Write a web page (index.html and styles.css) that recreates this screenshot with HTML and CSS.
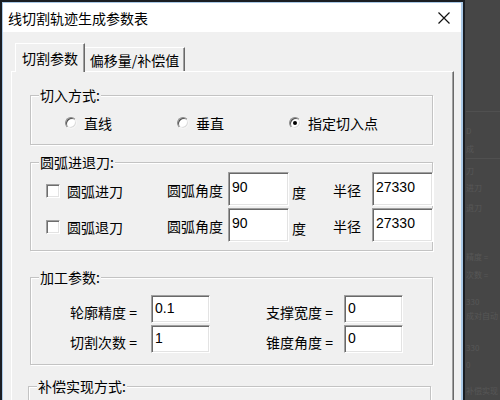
FILE: index.html
```html
<!DOCTYPE html>
<html>
<head>
<meta charset="utf-8">
<title>线切割轨迹生成参数表</title>
<link rel="stylesheet" href="styles.css">
</head>
<body>
<div class="window">
  <div class="frame">
    <div class="titlebar">
      <span class="title">线切割轨迹生成参数表</span>
      <svg class="close" width="12" height="12" viewBox="0 0 12 12"><path d="M0.5 0.5 L11.5 11.5 M11.5 0.5 L0.5 11.5" stroke="#111" stroke-width="1.2" fill="none"/></svg>
    </div>
    <div class="client">
      <div class="tabs">
        <div class="tab active">切割参数</div>
        <div class="tab">偏移量/补偿值</div>
      </div>
      <div class="panel">
        <fieldset class="group g1">
          <legend>切入方式:</legend>
          <div class="radios">
            <div class="radio"><span class="rb"></span>直线</div>
            <div class="radio"><span class="rb"></span>垂直</div>
            <div class="radio"><span class="rb on"></span>指定切入点</div>
          </div>
        </fieldset>
        <fieldset class="group g2">
          <legend>圆弧进退刀:</legend>
          <div class="arc">
            <div class="check"><span class="cb"></span>圆弧进刀</div>
            <div class="lbl">圆弧角度</div>
            <div class="edit tall">90</div>
            <div class="lbl deg">度</div>
            <div class="lbl">半径</div>
            <div class="edit tall">27330</div>
            <div class="check"><span class="cb"></span>圆弧退刀</div>
            <div class="lbl">圆弧角度</div>
            <div class="edit tall">90</div>
            <div class="lbl deg">度</div>
            <div class="lbl">半径</div>
            <div class="edit tall">27330</div>
          </div>
        </fieldset>
        <fieldset class="group g3">
          <legend>加工参数:</legend>
          <div class="proc">
            <div class="lbl low">轮廓精度 =</div>
            <div class="edit">0.1</div>
            <div></div>
            <div class="lbl low">支撑宽度 =</div>
            <div class="edit">0</div>
            <div class="lbl low">切割次数 =</div>
            <div class="edit">1</div>
            <div></div>
            <div class="lbl low">锥度角度 =</div>
            <div class="edit">0</div>
          </div>
        </fieldset>
        <fieldset class="group g4">
          <legend>补偿实现方式:</legend>
          <div class="g4body"></div>
        </fieldset>
      </div>
    </div>
  </div>
</div>
<div class="desk">
  <div class="hl h1"></div>
  <div class="ft d1">D</div>
  <div class="ft d2">成</div>
  <div class="hl h2"></div>
  <div class="ft d3">刀</div>
  <div class="ft d4">进刀</div>
  <div class="ft d5">退刀</div>
  <div class="ft d6">精度 =</div>
  <div class="ft d7">次数 =</div>
  <div class="ft d8">330</div>
  <div class="ft d9">成对自动</div>
  <div class="ft d10">330</div>
  <div class="ft d11">0</div>
  <div class="ft d12">补偿实现</div>
</div>
</body>
</html>
```
FILE: styles.css
```css
* { box-sizing: border-box; }
html, body { margin: 0; padding: 0; }
body {
  width: 500px;
  height: 400px;
  overflow: hidden;
  background: #464646;
  display: flex;
  font-family: "Noto Sans CJK SC", "Liberation Sans", sans-serif;
  font-size: 14px;
  color: #000;
}
.window {
  width: 465px;
  flex: none;
  height: 400px;
  overflow: hidden;
  border: 2px solid #1a1d22;
  border-bottom: 0;
}
.frame {
  height: 100%;
  border: 1px solid #a9c8e6;
  border-right-width: 2px;
  border-bottom: 0;
  display: flex;
  flex-direction: column;
}
.titlebar {
  height: 29px;
  flex: none;
  background: #fff;
  display: flex;
  align-items: center;
  padding: 0 11px 0 5px;
}
.title { flex: 1; line-height: 16px; white-space: nowrap; }
.close { display: block; flex: none; }
.client {
  flex: 1;
  min-height: 0;
  overflow: hidden;
  background: #f0f0f0;
  padding: 11px 7px 0 8px;
  display: flex;
  flex-direction: column;
}
.tabs {
  height: 28px;
  flex: none;
  display: flex;
  align-items: flex-end;
  padding-left: 4px;
}
.tab {
  height: 24px;
  width: 100px;
  display: flex;
  align-items: center;
  justify-content: center;
  line-height: 16px;
  border-top: 1px solid #fff;
  border-right: 1px solid #696969;
  box-shadow: inset -1px 0 0 #a0a0a0;
  background: #f0f0f0;
  padding-top: 1px;
}
.tab.active {
  width: 70px;
  height: 29px;
  margin-bottom: -1px;
  border-left: 1px solid #fff;
  position: relative;
  z-index: 1;
  padding-top: 0;
}
.panel {
  flex: 1;
  min-height: 0;
  border-top: 1px solid #fff;
  border-left: 1px solid #fff;
  border-right: 1px solid #696969;
  box-shadow: inset -1px 0 0 #a0a0a0;
  padding: 15px 0 0 18px;
}
.group {
  margin: 0;
  padding: 0;
  min-width: 0;
  width: 403px;
  border: 1px solid #c3c3c3;
  box-shadow: inset 1px 1px 0 #fff, 1px 1px 0 #fff;
}
.group legend {
  margin-left: 8px;
  padding: 0 1px;
  height: 16px;
  line-height: 16px;
  background: #f0f0f0;
}
.g2 { margin-top: 9px; }
.g3 { margin-top: 18px; }
.g4 { margin-top: 13px; margin-left: -2px; }
.radios {
  display: grid;
  grid-template-columns: 112px 112px 112px;
  height: 16px;
  margin: 12px 0 13px 34px;
}
.radio { display: flex; align-items: center; gap: 7px; line-height: 16px; }
.rb {
  width: 12px;
  height: 12px;
  border-radius: 50%;
  background: #fff;
  border: 1px solid;
  border-color: #8a8a8a #f4f4f4 #f4f4f4 #8a8a8a;
  box-shadow: inset 1px 1px 0 #505050, inset -1px -1px 0 #dcdcdc;
  display: flex;
  align-items: center;
  justify-content: center;
}
.rb.on::after {
  content: "";
  width: 4px;
  height: 4px;
  border-radius: 50%;
  background: #000;
}
.arc {
  display: grid;
  grid-template-columns: 121px 61px 61px 44px 39px 61px;
  grid-template-rows: 34px 34px;
  row-gap: 2px;
  align-items: center;
  margin: 2px 0 8px 15px;
}
.check { display: flex; align-items: center; gap: 7px; line-height: 16px; padding-top: 3px; }
.cb {
  width: 14px;
  height: 14px;
  background: #fff;
  border: 1px solid;
  border-color: #a0a0a0 #fff #fff #a0a0a0;
  box-shadow: inset 1px 1px 0 #6e6e6e, inset -1px -1px 0 #e3e3e3;
}
.lbl { line-height: 16px; white-space: nowrap; padding-top: 2px; }
.lbl.deg { padding-left: 3px; padding-top: 6px; }
.lbl.low { padding-top: 5px; }
.edit {
  align-self: stretch;
  background: #fff;
  border: 1px solid;
  border-color: #a0a0a0 #fff #fff #a0a0a0;
  box-shadow: inset 1px 1px 0 #696969, inset -1px -1px 0 #e3e3e3;
  font-family: "Liberation Sans", Arial, sans-serif;
  font-size: 14px;
  line-height: 16px;
  padding: 4px 3px 0 3px;
}
.edit.tall { padding-top: 6px; }
.proc {
  display: grid;
  grid-template-columns: 81px 59px 56px 78px 59px;
  grid-template-rows: 28px 28px;
  row-gap: 2px;
  align-items: center;
  margin: 10px 0 11px 39px;
}
.g4body { height: 20px; }

.desk {
  flex: 1;
  min-width: 0;
  display: flex;
  flex-direction: column;
  color: #575757;
  font-size: 8px;
  line-height: 10px;
  white-space: nowrap;
  padding-left: 1px;
}
.ft { height: 10px; flex: none; }
.hl { height: 1px; background: #505050; flex: none; }
.h1 { margin-top: 111px; }
.d1 { margin-top: 14px; }
.d2 { margin-top: 8px; }
.h2 { margin-top: 4px; }
.d3 { margin-top: 7px; }
.d4 { margin-top: 7px; }
.d5 { margin-top: 10px; }
.d6 { margin-top: 39px; }
.d7 { margin-top: 8px; }
.d8 { margin-top: 17px; }
.d9 { margin-top: 4px; }
.d10 { margin-top: 22px; }
.d11 { margin-top: 7px; }
.d12 { margin-top: 16px; }
```
